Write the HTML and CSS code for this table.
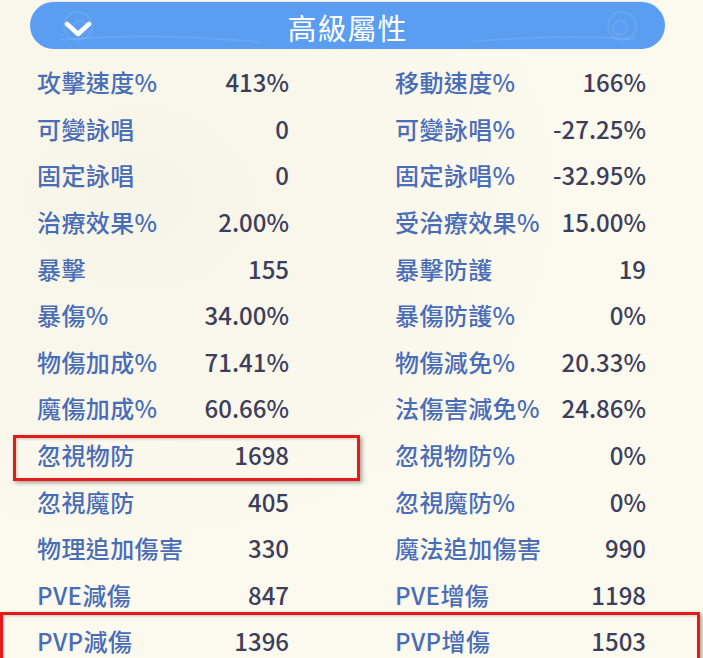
FILE: index.html
```html
<!DOCTYPE html>
<html lang="zh-Hant">
<head>
<meta charset="utf-8">
<link rel="stylesheet" href="styles.css">
</head>
<body>
<div class="page">
  <div class="header">
    <svg class="deco" width="635" height="47" viewBox="0 0 635 47">
      <g fill="none" stroke="#ffffff" stroke-opacity="0.09" stroke-width="2">
        <circle cx="48" cy="24" r="14"/>
        <circle cx="50" cy="26" r="7"/>
        <path d="M30 38 Q120 30 230 40"/>
        <circle cx="592" cy="24" r="14"/>
        <circle cx="590" cy="26" r="7"/>
        <path d="M605 37 Q520 32 440 40"/>
      </g>
    </svg>
    <svg class="chev" width="28" height="18" viewBox="0 0 28 18">
      <polyline points="3,4 14,14 25,4" fill="none" stroke="#ffffff" stroke-width="4.5" stroke-linecap="round" stroke-linejoin="round"/>
    </svg>
    <div class="title">高級屬性</div>
  </div>
  <div class="grid">
    <div class="cell"><span class="lbl">攻擊速度%</span><span class="val">413%</span></div>
    <div class="cell"><span class="lbl">移動速度%</span><span class="val">166%</span></div>
    <div class="cell"><span class="lbl">可變詠唱</span><span class="val">0</span></div>
    <div class="cell"><span class="lbl">可變詠唱%</span><span class="val">-27.25%</span></div>
    <div class="cell"><span class="lbl">固定詠唱</span><span class="val">0</span></div>
    <div class="cell"><span class="lbl">固定詠唱%</span><span class="val">-32.95%</span></div>
    <div class="cell"><span class="lbl">治療效果%</span><span class="val">2.00%</span></div>
    <div class="cell"><span class="lbl">受治療效果%</span><span class="val">15.00%</span></div>
    <div class="cell"><span class="lbl">暴擊</span><span class="val">155</span></div>
    <div class="cell"><span class="lbl">暴擊防護</span><span class="val">19</span></div>
    <div class="cell"><span class="lbl">暴傷%</span><span class="val">34.00%</span></div>
    <div class="cell"><span class="lbl">暴傷防護%</span><span class="val">0%</span></div>
    <div class="cell"><span class="lbl">物傷加成%</span><span class="val">71.41%</span></div>
    <div class="cell"><span class="lbl">物傷減免%</span><span class="val">20.33%</span></div>
    <div class="cell"><span class="lbl">魔傷加成%</span><span class="val">60.66%</span></div>
    <div class="cell"><span class="lbl">法傷害減免%</span><span class="val">24.86%</span></div>
    <div class="cell"><span class="lbl">忽視物防</span><span class="val">1698</span></div>
    <div class="cell"><span class="lbl">忽視物防%</span><span class="val">0%</span></div>
    <div class="cell"><span class="lbl">忽視魔防</span><span class="val">405</span></div>
    <div class="cell"><span class="lbl">忽視魔防%</span><span class="val">0%</span></div>
    <div class="cell"><span class="lbl">物理追加傷害</span><span class="val">330</span></div>
    <div class="cell"><span class="lbl">魔法追加傷害</span><span class="val">990</span></div>
    <div class="cell"><span class="lbl">PVE減傷</span><span class="val">847</span></div>
    <div class="cell"><span class="lbl">PVE增傷</span><span class="val">1198</span></div>
    <div class="cell"><span class="lbl">PVP減傷</span><span class="val">1396</span></div>
    <div class="cell"><span class="lbl">PVP增傷</span><span class="val">1503</span></div>
  </div>
  <div class="mark mark-a"></div>
  <div class="mark mark-b"></div>
</div>
</body>
</html>
```
FILE: styles.css
```css
html, body {
  margin: 0;
  padding: 0;
  background: #fcfaee;
  overflow: hidden;
}
.page {
  position: relative;
  width: 703px;
  height: 658px;
  overflow: hidden;
  background: radial-gradient(ellipse at 20% 30%, #f7f5e8 0%, #fcfaee 60%);
  font-family: "Noto Sans CJK TC", "Noto Sans", sans-serif;
}
.header {
  position: relative;
  margin: 2px 0 0 30px;
  width: 635px;
  height: 47px;
  border-radius: 24px;
  background: #5b9ef1;
  display: flex;
  align-items: center;
  justify-content: center;
  box-shadow: 0 -1px 0 #e6ecf5;
}
.deco {
  position: absolute;
  left: 0;
  top: 0;
}
.chev {
  position: absolute;
  left: 34px;
  top: 18px;
}
.title {
  color: #ffffff;
  font-size: 29px;
  line-height: 47px;
  letter-spacing: 1px;
  padding-top: 3px;
}
.grid {
  display: grid;
  grid-template-columns: 252px 251px;
  column-gap: 106px;
  padding-left: 37px;
  margin-top: 10px;
  grid-auto-rows: 46.6px;
}
.cell {
  display: flex;
  justify-content: space-between;
  align-items: center;
  font-size: 24px;
  font-weight: 500;
  line-height: 46px;
}
.lbl {
  color: #4a6db8;
  letter-spacing: 0.4px;
}
.val {
  color: #3c3e5c;
}
.mark {
  position: absolute;
  border: 3px solid #e51a1a;
  box-shadow: 2px 2px 4px rgba(0, 0, 0, 0.35), inset 1px 1px 3px rgba(0, 0, 0, 0.2);
}
.mark-a {
  left: 13px;
  top: 435px;
  width: 341px;
  height: 40px;
}
.mark-b {
  left: 0;
  top: 612px;
  width: 694px;
  height: 60px;
}
```
